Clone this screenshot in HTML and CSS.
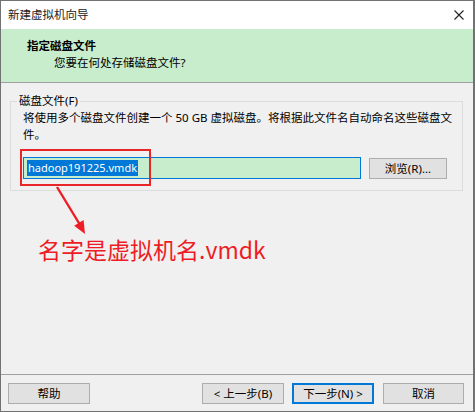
FILE: index.html
```html
<!DOCTYPE html>
<html lang="zh-CN">
<head>
<meta charset="utf-8">
<title>新建虚拟机向导</title>
<link rel="stylesheet" href="styles.css">
</head>
<body>
<div class="window">
  <div class="titlebar">
    <span class="title">新建虚拟机向导</span>
    <svg class="close" width="10" height="10" viewBox="0 0 10 10"><path d="M0.5 0.5 L9.5 9.5 M9.5 0.5 L0.5 9.5" stroke="#222" stroke-width="1.1" fill="none"/></svg>
  </div>
  <div class="header">
    <div class="h-title">指定磁盘文件</div>
    <div class="h-sub">您要在何处存储磁盘文件?</div>
  </div>
  <div class="content">
    <fieldset class="group">
      <legend class="legend">磁盘文件(F)</legend>
      <p class="desc">将使用多个磁盘文件创建一个 50 GB 虚拟磁盘。将根据此文件名自动命名这些磁盘文<br>件。</p>
      <div class="file-row">
        <div class="file-input"><span class="sel">hadoop191225.vmdk</span></div>
        <button class="btn browse">浏览(R)...</button>
      </div>
    </fieldset>
    <div class="note">名字是虚拟机名.vmdk</div>
    <div class="mark-box"></div>
    <svg class="mark-arrow" width="46" height="54" viewBox="0 0 46 54">
      <line x1="7" y1="2" x2="29.5" y2="39" stroke="#ee1c25" stroke-width="2.4"/>
      <polygon points="35,49 33.6,35 24.2,40.8" fill="#ee1c25"/>
    </svg>
  </div>
  <div class="footer">
    <button class="btn">帮助</button>
    <div class="nav">
      <button class="btn">&lt; 上一步(B)</button>
      <button class="btn default">下一步(N) &gt;</button>
      <button class="btn cancel">取消</button>
    </div>
  </div>
</div>
</body>
</html>
```

FILE: styles.css
```css
* { box-sizing: border-box; }
html, body { margin: 0; padding: 0; background: #f0f0f0; }
body {
  font-family: "Noto Sans", "Noto Sans CJK SC", sans-serif;
  font-size: 11.5px;
  color: #000;
}
.window {
  width: 475px;
  height: 412px;
  border: 1px solid #727272;
  border-right-width: 2px;
  display: flex;
  flex-direction: column;
  background: #f0f0f0;
}
.titlebar {
  height: 28px;
  background: #fff;
  display: flex;
  align-items: center;
  justify-content: space-between;
  padding: 0 9px 1px 7px;
  flex: none;
}
.title { color: #1a1a1a; line-height: 16px; }
.close { display: block; }
.header {
  height: 54px;
  flex: none;
  background: #c7edcc;
  border-bottom: 1px solid #a0a0a0;
  padding: 8px 0 0 26px;
  line-height: 17px;
}
.h-title { font-weight: bold; }
.h-sub { padding-left: 27px; }
.content {
  flex: 1;
  position: relative;
  padding: 10px 10px 0 9px;
}
.group {
  margin: 0;
  border: 1px solid #dcdcdc;
  padding: 0 11px 11px 12px;
  min-width: 0;
}
.legend {
  padding: 0 2px;
  margin-left: -6px;
  line-height: 16px;
  color: #000;
}
.desc {
  margin: 0;
  line-height: 17px;
  white-space: nowrap;
}
.file-row {
  display: flex;
  align-items: flex-start;
  gap: 8px;
  margin-top: 14px;
}
.file-input {
  width: 338px;
  height: 22px;
  border: 1px solid #0078d7;
  background: #c7edcc;
  padding: 2px 3px;
  display: flex;
  align-items: center;
}
.sel {
  background: #0078d7;
  color: #fff;
  line-height: 16px;
  padding: 0 1px;
  font-size: 11px;
}
.btn {
  font: inherit;
  background: #e1e1e1;
  border: 1px solid #adadad;
  height: 21px;
  width: 82px;
  padding: 0;
  color: #000;
  line-height: 17px;
}
.browse {
  width: 78px;
  height: 21px;
  margin-top: 1px;
}
.note {
  margin-top: 44px;
  padding-left: 28px;
  font-family: "Noto Sans CJK SC", sans-serif;
  font-size: 23px;
  line-height: 28px;
  color: #ee1c25;
}
.mark-box {
  position: absolute;
  left: 19px;
  top: 66px;
  width: 131px;
  height: 37px;
  border: 2px solid #e8262a;
}
.mark-arrow {
  position: absolute;
  left: 49px;
  top: 102px;
}
.footer {
  flex: none;
  border-top: 1px solid #a0a0a0;
  padding: 8px 9px 7px 7px;
  display: flex;
  justify-content: space-between;
  align-items: center;
}
.nav {
  display: flex;
  gap: 8px;
}
.default {
  border: 2px solid #0078d7;
}
.cancel { margin-left: 1px; width: 81px; }
```
